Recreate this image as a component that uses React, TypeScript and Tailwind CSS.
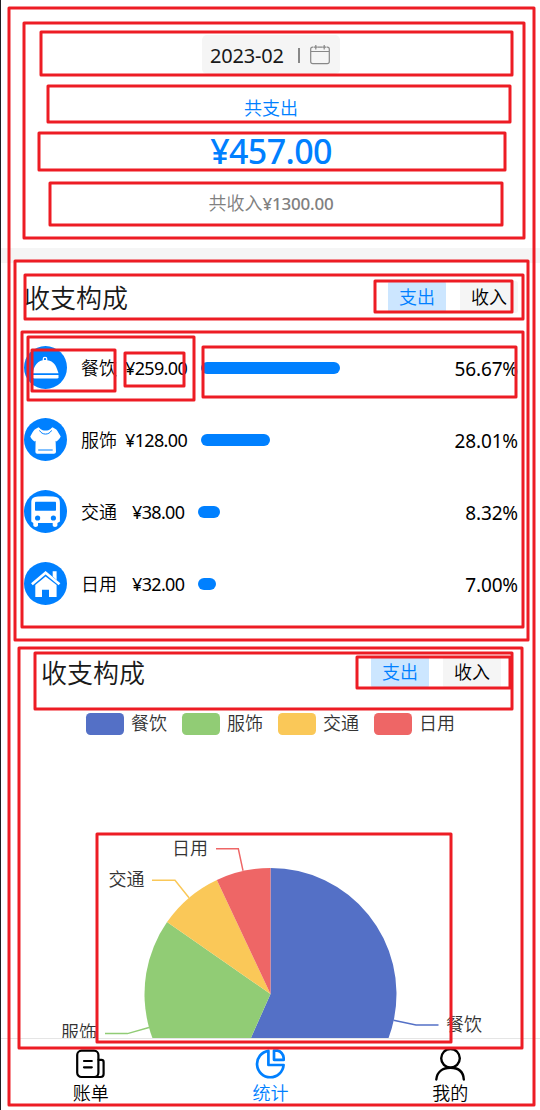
import type { ReactNode } from "react";

type Row = { name: string; amount: string; percent: string; bar: number; icon: ReactNode; amountBox: string };

const DishIcon = (
  <g fill="#fff">
    <circle cx="21" cy="13.2" r="1.8" fill="none" stroke="#fff" strokeWidth="1.3" />
    <path d="M9 27.3 C9.3 20 14 14 21 14 C28 14 31.5 18 33 23 L34.5 27.3 Z" />
    <path d="M9 29.1 H34.5 V31.2 A1.6 1.6 0 0 1 33 32.6 H10.5 A1.6 1.6 0 0 1 9 31.2 Z" />
  </g>
);

const ShirtIcon = (
  <g>
    <path
      d="M14.5 9.2 C16 10 17 12.6 21.5 12.6 C26 12.6 27 10 28.5 9.2 L32.3 11.6 C33.8 13.5 35.5 16.5 36.7 18.6 C35.8 20.8 34.3 22.3 32.3 23.6 L31.6 22.8 L32 34 Q31.8 35.7 30 35.7 H13.2 Q11.5 35.7 11.4 34 L11.6 22.8 L10.6 23.6 C8.7 22.3 7 20.8 6.3 18.6 C7.5 16.2 9 13.5 10.7 11.6 Z"
      fill="#fff"
    />
    <path d="M15.5 12.4 C18 17.3 25 17.3 27.6 12.4 M14.2 32 H28.7" fill="none" stroke="#0080ff" strokeWidth="1" />
  </g>
);

const BusIcon = (
  <g>
    <path
      d="M7.3 13 C7.3 8 9.5 7 14 6.6 Q21.5 5.9 29 6.6 C33.8 7 35.9 8 35.9 13 V31.5 L33.4 33 V35.6 Q33.2 37 31 37 Q28.8 37 28.7 35.6 V33 H14 V35.6 Q13.8 37 11.6 37 Q9.5 37 9.3 35.6 V33 L7.3 31.5 Z"
      fill="#fff"
    />
    <g fill="#0080ff">
      <rect x="11" y="11.8" width="21" height="9" rx=".7" />
      <circle cx="13.6" cy="28" r="2.6" />
      <circle cx="29.4" cy="28" r="2.6" />
    </g>
  </g>
);

const HouseIcon = (
  <g>
    <path d="M28.7 9.2 H32.6 V18 L28.7 14.5 Z" fill="#fff" />
    <path d="M7.9 22.2 L21.6 10.7 L35.5 22.2" fill="none" stroke="#fff" strokeWidth="2.7" />
    <path d="M11.3 22.9 L21.6 14.6 L32.6 23 V35 H25 V27.7 H18 V35 H11.3 Z" fill="#fff" />
  </g>
);

const rows: Row[] = [
  { name: "餐饮", amount: "¥259.00", percent: "56.67%", bar: 139, icon: DishIcon, amountBox: "w-[84px] pl-[8px]" },
  { name: "服饰", amount: "¥128.00", percent: "28.01%", bar: 69, icon: ShirtIcon, amountBox: "w-[84px] pl-[8px]" },
  { name: "交通", amount: "¥38.00", percent: "8.32%", bar: 22, icon: BusIcon, amountBox: "w-[81px] pl-[15px]" },
  { name: "日用", amount: "¥32.00", percent: "7.00%", bar: 18, icon: HouseIcon, amountBox: "w-[81px] pl-[15px]" },
];

const legend = [
  { name: "餐饮", color: "#5470c6" },
  { name: "服饰", color: "#91cc75" },
  { name: "交通", color: "#fac858" },
  { name: "日用", color: "#ee6666" },
];

const outlines = [
  [9, 8, 534, 1105],
  [24, 23, 524, 238],
  [41, 32, 512, 75],
  [48, 86, 510, 122],
  [39, 133, 505, 170],
  [50, 183, 502, 225],
  [15, 261, 528, 640],
  [25, 275, 523, 319],
  [375, 281, 512, 312],
  [22, 332, 523, 627],
  [28, 337, 194, 400],
  [32, 350, 115, 391],
  [125, 353, 184, 386],
  [203, 347, 516, 397],
  [19, 648, 522, 1048],
  [35, 653, 512, 709],
  [357, 657, 510, 688],
  [97, 834, 451, 1042],
];

function Tabs() {
  return (
    <div className="flex h-8 gap-3.5 text-[18px] leading-8">
      <span className="w-[58px] rounded-[3px] bg-[#cce6ff] text-center text-[#0080ff]">支出</span>
      <span className="w-[58px] rounded-[3px] bg-[#f5f5f5] text-center text-black">收入</span>
    </div>
  );
}

const point = (deg: number, r: number) => {
  const a = (deg * Math.PI) / 180;
  return `${(185 + r * Math.sin(a)).toFixed(2)} ${(254 - r * Math.cos(a)).toFixed(2)}`;
};

function slice(from: number, to: number) {
  return `M185 254 L${point(from, 126)} A126 126 0 ${to - from > 180 ? 1 : 0} 1 ${point(to, 126)} Z`;
}

function Pie() {
  return (
    <svg viewBox="-85.5 0 540 298" className="block h-[298px] w-full" fontSize="18" fill="#333">
      <path d={slice(0, 204)} fill="#5470c6" />
      <path d={slice(204, 304.8)} fill="#91cc75" />
      <path d={slice(304.8, 334.8)} fill="#fac858" />
      <path d={slice(334.8, 360)} fill="#ee6666" />
      <g fill="none" strokeWidth="1.5">
        <path d="M130.5 108.7 H152.8 L157.5 130.7" stroke="#ee6666" />
        <path d="M66.5 140.3 H89.5 L103.5 157.7" stroke="#fac858" />
        <path d="M19.5 293.6 H42 L63.5 287.5" stroke="#91cc75" />
        <path d="M308 280.2 L330.5 285 H353" stroke="#5470c6" />
      </g>
      <text x="86.5" y="114.5">日用</text>
      <text x="23" y="145.5">交通</text>
      <text x="-24.5" y="298.5">服饰</text>
      <text x="360.5" y="290.5">餐饮</text>
    </svg>
  );
}

export default function App() {
  return (
    <div className="relative flex h-[1110px] w-[540px] flex-col overflow-hidden bg-white font-['Noto_Sans','Noto_Sans_CJK_SC',sans-serif] font-[350] text-black">
      <header className="flex h-[248px] shrink-0 flex-col items-center pt-[35px] pl-[2px]">
        <div className="flex h-[39px] w-[138px] items-center rounded-[5px] bg-[#f5f5f5] pl-2">
          <span className="w-[88px] pt-[2px] text-[20px] leading-[30px] font-normal tracking-[-0.2px] text-[#191919]">2023-02</span>
          <span className="mt-px h-[15px] w-[2px] bg-[#888]" />
          <svg viewBox="0 0 20 20" className="ml-[10px] size-5" fill="none" stroke="#888" strokeWidth="1.2">
            <path d="M3.5 2.2 H2.6 Q.7 2.2 .7 4.2 V16.5 Q.7 18.7 2.8 18.7 H17.2 Q19.3 18.7 19.3 16.5 V4.2 Q19.3 2.2 17.4 2.2 H16.5 M8 2.2 H12 M.7 6.5 H19.3 M5.8 0 V4.6 M14.2 0 V4.6 M4 2.2 H7.8 M12.2 2.2 H16" />
          </svg>
        </div>
        <div className="mt-[20px] h-7 text-[18px] leading-7 text-[#0080ff]">共支出</div>
        <div className="mt-[4px] h-[50px] text-[34px] leading-[50px] font-medium tracking-[-0.6px] text-[#0080ff]">¥457.00</div>
        <div className="mt-[13px] h-7 text-[18px] leading-7 text-[#808080]">
          共收入<span className="text-[17px] font-medium tracking-[-0.2px]">¥1300.00</span>
        </div>
      </header>
      <div className="h-[15px] shrink-0 bg-[#f5f5f5]" />
      <section className="h-[390px] shrink-0 pr-[22px] pl-6">
        <div className="flex h-[68px] items-center justify-between">
          <h2 className="pt-px text-[26px] leading-10 text-[#191919]">收支构成</h2>
          <Tabs />
        </div>
        <div className="flex flex-col">
          {rows.map((row) => (
            <div key={row.name} className="flex h-[72px] items-center">
              <svg viewBox="0 0 43 43" className="size-[43px]">
                <circle cx="21.5" cy="21.5" r="21.5" fill="#0080ff" />
                {row.icon}
              </svg>
              <span className="ml-[14px] w-[36px] pt-[2px] text-[18px] leading-7">{row.name}</span>
              <span className={`${row.amountBox} pt-px text-[18px] leading-7 font-normal tracking-[-0.65px]`}>{row.amount}</span>
              <span className="mt-px h-3 rounded-full bg-[#0080ff]" style={{ width: row.bar }} />
              <span className="ml-auto pt-[3px] text-[19px] leading-7 font-normal tracking-[-0.15px]">{row.percent}</span>
            </div>
          ))}
        </div>
      </section>
      <main className="h-[385px] shrink-0 overflow-hidden">
        <div className="flex h-[55px] items-center justify-between pr-[39px] pb-[17px] pl-[41px]">
          <h2 className="pt-[2px] text-[26px] leading-10 text-[#191919]">收支构成</h2>
          <Tabs />
        </div>
        <div className="flex h-[32px] items-start pt-[4px] pl-[86px]">
          {legend.map((item) => (
            <div key={item.name} className="flex w-24 items-start">
              <span className="mt-px h-[21.5px] w-[37.5px] rounded-[4.5px]" style={{ background: item.color }} />
              <span className="-mt-px ml-[7.5px] text-[18px] leading-6 text-[#333]">{item.name}</span>
            </div>
          ))}
        </div>
        <Pie />
      </main>
      <footer className="grid h-[72px] shrink-0 grid-cols-3 border-t border-[#e5e5e5] bg-white pl-px">
        <div className="flex flex-col items-center pt-[10px]">
          <svg viewBox="1 0 30 30" className="size-[30px]" fill="none" stroke="#000" strokeWidth="2.2" strokeLinecap="round">
            <rect x="2.2" y="1.7" width="21.2" height="26.3" rx="4.3" />
            <path d="M23.6 10.8 H26.4 Q28.6 10.8 28.6 13 V25 Q28.6 28 25.6 28 H19.5 M9 12 H16.8 M9 18.3 H16.8" />
          </svg>
          <span className="mt-[2px] text-[18px] leading-6">账单</span>
        </div>
        <div className="flex flex-col items-center pt-[10px] text-[#0080ff]">
          <svg viewBox="0 0 30 30" className="size-[30px]" fill="none" stroke="currentColor" strokeWidth="2.7" strokeLinejoin="round">
            <path d="M13.4 1.8 A13.3 13.3 0 1 0 28.6 16 H13.4 Z" />
            <path d="M19 1.6 V10.8 H28.7 V9.2 Q28 3 22.5 1.6 Z" />
          </svg>
          <span className="mt-[2px] text-[18px] leading-6">统计</span>
        </div>
        <div className="flex flex-col items-center pt-[10px]">
          <svg viewBox="0 0 30 33" className="h-[33px] w-[30px]" fill="none" stroke="#000" strokeWidth="2.4" strokeLinecap="round">
            <circle cx="15.5" cy="9.3" r="9.3" />
            <path d="M1.3 30.5 C2 22.5 8 18.8 15.5 18.8 C23 18.8 28.3 22.5 28.8 30.5" />
          </svg>
          <span className="-mt-px text-[18px] leading-6">我的</span>
        </div>
      </footer>
      <svg viewBox="0 0 540 1110" className="pointer-events-none absolute inset-0 h-full w-full" fill="none" stroke="#ed1c24" strokeWidth="3" strokeLinejoin="round">
        {outlines.map(([l, t, r, b]) => (
          <rect key={`${l}-${t}`} x={l} y={t} width={r - l} height={b - t} />
        ))}
        <path d="M.5 0 V1110" stroke="#1e1e22" strokeWidth="1" />
      </svg>
    </div>
  );
}
